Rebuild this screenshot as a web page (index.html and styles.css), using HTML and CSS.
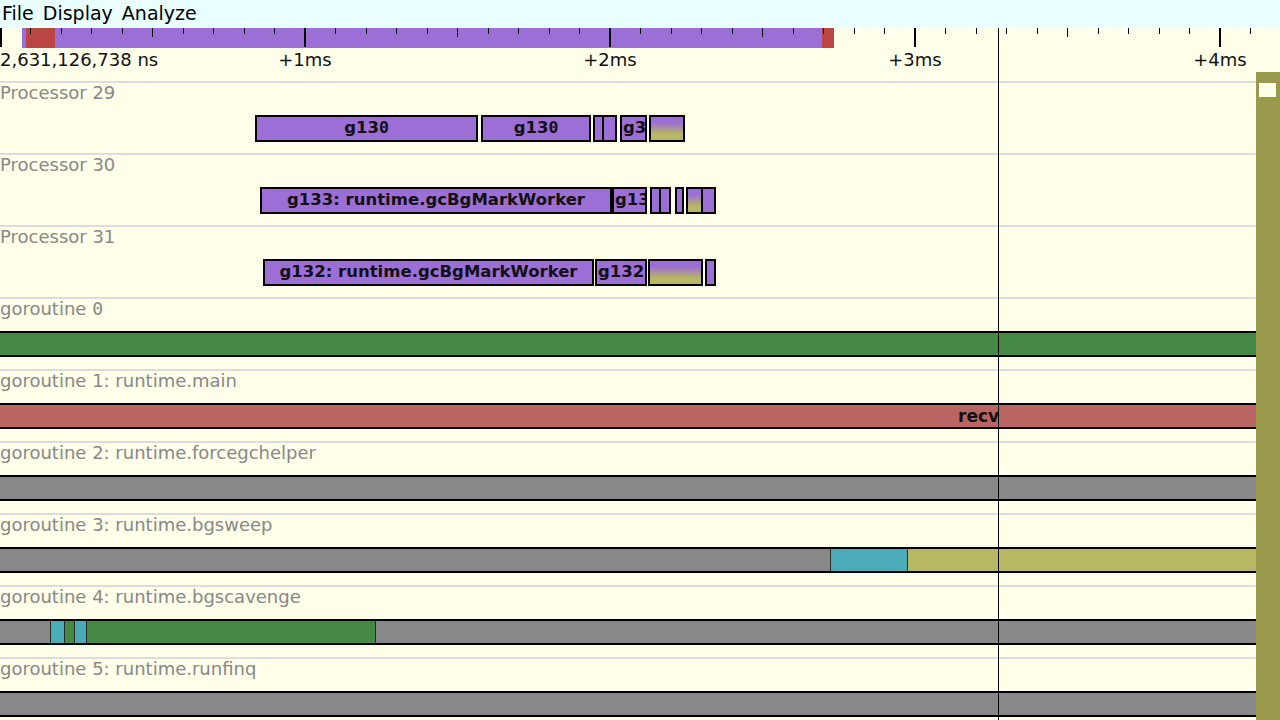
FILE: index.html
```html
<!DOCTYPE html>
<html>
<head>
<meta charset="utf-8">
<title>Trace</title>
<link rel="stylesheet" href="styles.css">
</head>
<body>
<div class="app">
  <div class="menubar">
    <span class="menu">File</span>
    <span class="menu">Display</span>
    <span class="menu">Analyze</span>
  </div>
  <div class="main">
    <div class="timeline">
      <div class="ruler">
        <svg class="ticks" width="1256" height="20" viewBox="0 0 1256 20">
          <rect x="22" y="0" width="800" height="20" fill="#9c6fd6"/>
          <rect x="26" y="0" width="29" height="20" fill="#bb4444"/>
          <rect x="822" y="0" width="12" height="20" fill="#bb4444"/>
          <g fill="#000">
            <rect x="0" y="0" width="2" height="19"/>
            <rect x="30" y="0" width="1" height="6"/>
            <rect x="61" y="0" width="1" height="6"/>
            <rect x="91" y="0" width="1" height="6"/>
            <rect x="122" y="0" width="1" height="6"/>
            <rect x="152" y="0" width="1" height="9"/>
            <rect x="183" y="0" width="1" height="6"/>
            <rect x="213" y="0" width="1" height="6"/>
            <rect x="244" y="0" width="1" height="6"/>
            <rect x="274" y="0" width="1" height="6"/>
            <rect x="304" y="0" width="2" height="19"/>
            <rect x="335" y="0" width="1" height="6"/>
            <rect x="366" y="0" width="1" height="6"/>
            <rect x="396" y="0" width="1" height="6"/>
            <rect x="427" y="0" width="1" height="6"/>
            <rect x="457" y="0" width="1" height="9"/>
            <rect x="488" y="0" width="1" height="6"/>
            <rect x="518" y="0" width="1" height="6"/>
            <rect x="549" y="0" width="1" height="6"/>
            <rect x="579" y="0" width="1" height="6"/>
            <rect x="609" y="0" width="2" height="19"/>
            <rect x="640" y="0" width="1" height="6"/>
            <rect x="671" y="0" width="1" height="6"/>
            <rect x="701" y="0" width="1" height="6"/>
            <rect x="732" y="0" width="1" height="6"/>
            <rect x="762" y="0" width="1" height="9"/>
            <rect x="793" y="0" width="1" height="6"/>
            <rect x="823" y="0" width="1" height="6"/>
            <rect x="854" y="0" width="1" height="6"/>
            <rect x="884" y="0" width="1" height="6"/>
            <rect x="914" y="0" width="2" height="19"/>
            <rect x="945" y="0" width="1" height="6"/>
            <rect x="976" y="0" width="1" height="6"/>
            <rect x="1006" y="0" width="1" height="6"/>
            <rect x="1037" y="0" width="1" height="6"/>
            <rect x="1067" y="0" width="1" height="9"/>
            <rect x="1098" y="0" width="1" height="6"/>
            <rect x="1128" y="0" width="1" height="6"/>
            <rect x="1159" y="0" width="1" height="6"/>
            <rect x="1189" y="0" width="1" height="6"/>
            <rect x="1219" y="0" width="2" height="19"/>
            <rect x="1250" y="0" width="1" height="6"/>
          </g>
        </svg>
        <div class="rlabels">
          <span class="rl start">2,631,126,738 ns</span>
          <span class="rl" style="left:305px">+1ms</span>
          <span class="rl" style="left:610px">+2ms</span>
          <span class="rl" style="left:915px">+3ms</span>
          <span class="rl" style="left:1220px">+4ms</span>
        </div>
      </div>

      <div class="row">
        <div class="label">Processor 29</div>
        <div class="ptrack">
          <div class="box" style="left:255px;width:223px">g13<span class="z">0</span></div>
          <div class="box" style="left:481px;width:110px">g13<span class="z">0</span></div>
          <div class="box" style="left:593px;width:11px"></div>
          <div class="box" style="left:602px;width:15px"></div>
          <div class="box clip" style="left:620px;width:27px">g3</div>
          <div class="box grad" style="left:649px;width:36px"></div>
        </div>
      </div>

      <div class="row">
        <div class="label">Processor 30</div>
        <div class="ptrack">
          <div class="box" style="left:260px;width:352px">g133: runtime.gcBgMarkWorker</div>
          <div class="box clip" style="left:612px;width:35px">g133</div>
          <div class="box" style="left:650px;width:11px"></div>
          <div class="box" style="left:659px;width:12px"></div>
          <div class="box" style="left:675px;width:9px"></div>
          <div class="box grad" style="left:686px;width:17px"></div>
          <div class="box" style="left:701px;width:15px"></div>
        </div>
      </div>

      <div class="row">
        <div class="label">Processor 31</div>
        <div class="ptrack">
          <div class="box" style="left:263px;width:331px">g132: runtime.gcBgMarkWorker</div>
          <div class="box clip" style="left:595px;width:52px">g132</div>
          <div class="box grad" style="left:648px;width:55px"></div>
          <div class="box" style="left:705px;width:11px"></div>
        </div>
      </div>

      <div class="row">
        <div class="label">goroutine <span class="z">0</span></div>
        <div class="gtrack">
          <div class="seg green" style="left:0;width:1256px"></div>
        </div>
      </div>

      <div class="row">
        <div class="label">goroutine 1: runtime.main</div>
        <div class="gtrack">
          <div class="seg blocked" style="left:0;width:1256px"></div>
          <span class="segtext" style="left:958px">recv</span>
        </div>
      </div>

      <div class="row">
        <div class="label">goroutine 2: runtime.forcegchelper</div>
        <div class="gtrack">
          <div class="seg gray" style="left:0;width:1256px"></div>
        </div>
      </div>

      <div class="row">
        <div class="label">goroutine 3: runtime.bgsweep</div>
        <div class="gtrack">
          <div class="seg gray" style="left:0;width:830px"></div>
          <div class="seg teal" style="left:830px;width:77px"></div>
          <div class="seg olive" style="left:907px;width:349px"></div>
        </div>
      </div>

      <div class="row">
        <div class="label">goroutine 4: runtime.bgscavenge</div>
        <div class="gtrack">
          <div class="seg gray" style="left:0;width:50px"></div>
          <div class="seg teal" style="left:50px;width:14px"></div>
          <div class="seg green" style="left:64px;width:10px"></div>
          <div class="seg teal" style="left:74px;width:12px"></div>
          <div class="seg green" style="left:86px;width:289px"></div>
          <div class="seg gray" style="left:375px;width:881px"></div>
        </div>
      </div>

      <div class="row">
        <div class="label">goroutine 5: runtime.runfinq</div>
        <div class="gtrack">
          <div class="seg gray" style="left:0;width:1256px"></div>
        </div>
      </div>
    </div>
    <div class="scrollbar">
      <div class="thumb"></div>
    </div>
  </div>
  <div class="cursor"></div>
</div>
</body>
</html>
```

FILE: styles.css
```css
html, body {
  margin: 0;
  padding: 0;
}
body {
  width: 1280px;
  height: 720px;
  overflow: hidden;
  background: #ffffea;
  font-family: "DejaVu Sans", "Liberation Sans", sans-serif;
  color: #000;
}
.app {
  position: relative;
  width: 1280px;
  height: 720px;
  overflow: hidden;
}
.menubar {
  height: 28px;
  box-sizing: border-box;
  padding-bottom: 1px;
  background: #eaffff;
  display: flex;
  align-items: center;
  gap: 9px;
  padding-left: 2px;
  font-size: 19px;
  line-height: 27px;
  color: #000;
}
.main {
  display: flex;
  align-items: flex-start;
  background: #ffffea;
}
.timeline {
  width: 1256px;
  flex: none;
}
.ruler {
  position: relative;
  height: 53px;
}
.ticks {
  display: block;
}
.rlabels {
  position: relative;
  height: 33px;
}
.rl {
  position: absolute;
  top: 1px;
  font-size: 18px;
  line-height: 21px;
  white-space: nowrap;
  color: #111;
  transform: translateX(-50%);
}
.rl.start {
  left: 0;
  transform: none;
}
.row {
  height: 72px;
  box-sizing: border-box;
  border-top: 2px solid #dddddd;
}
.label {
  height: 32px;
  box-sizing: border-box;
  padding-top: 0;
  font-size: 18px;
  line-height: 20px;
  color: #888888;
  white-space: nowrap;
}
.z {
  font-family: "DejaVu Sans Mono", monospace;
}
.ptrack {
  position: relative;
  height: 27px;
}
.box {
  position: absolute;
  top: 0;
  height: 27px;
  box-sizing: border-box;
  border: 2px solid #000;
  background: #9c6fd6;
  font-weight: bold;
  font-size: 16.5px;
  line-height: 22px;
  text-align: center;
  white-space: nowrap;
  overflow: hidden;
  color: #111;
}
.box.clip {
  text-align: left;
  padding-left: 1px;
}
.box.grad {
  background: linear-gradient(to bottom, #9c6fd6 25%, #b8b864 75%);
}
.gtrack {
  position: relative;
  height: 26px;
  box-sizing: border-box;
  border-top: 2px solid #000;
  border-bottom: 2px solid #000;
  overflow: hidden;
}
.seg {
  position: absolute;
  top: 0;
  bottom: 0;
  box-sizing: border-box;
}
.seg + .seg {
  border-left: 1px solid #2a2a2a;
}
.green { background: #448844; }
.blocked { background: #bb6464; }
.gray { background: #888888; }
.teal { background: #4aabb9; }
.olive { background: #b8b864; }
.segtext {
  position: absolute;
  top: 0;
  font-weight: bold;
  font-size: 17px;
  line-height: 22px;
  color: #111;
  white-space: nowrap;
}
.scrollbar {
  width: 24px;
  flex: none;
  margin-top: 44px;
  height: 700px;
  background: #999a4c;
  box-sizing: border-box;
  padding-top: 11px;
  padding-left: 3px;
}
.thumb {
  width: 17px;
  height: 14px;
  background: #ffffea;
}
.cursor {
  position: absolute;
  left: 998px;
  top: 28px;
  bottom: 0;
  width: 1px;
  background: #000;
}
```
